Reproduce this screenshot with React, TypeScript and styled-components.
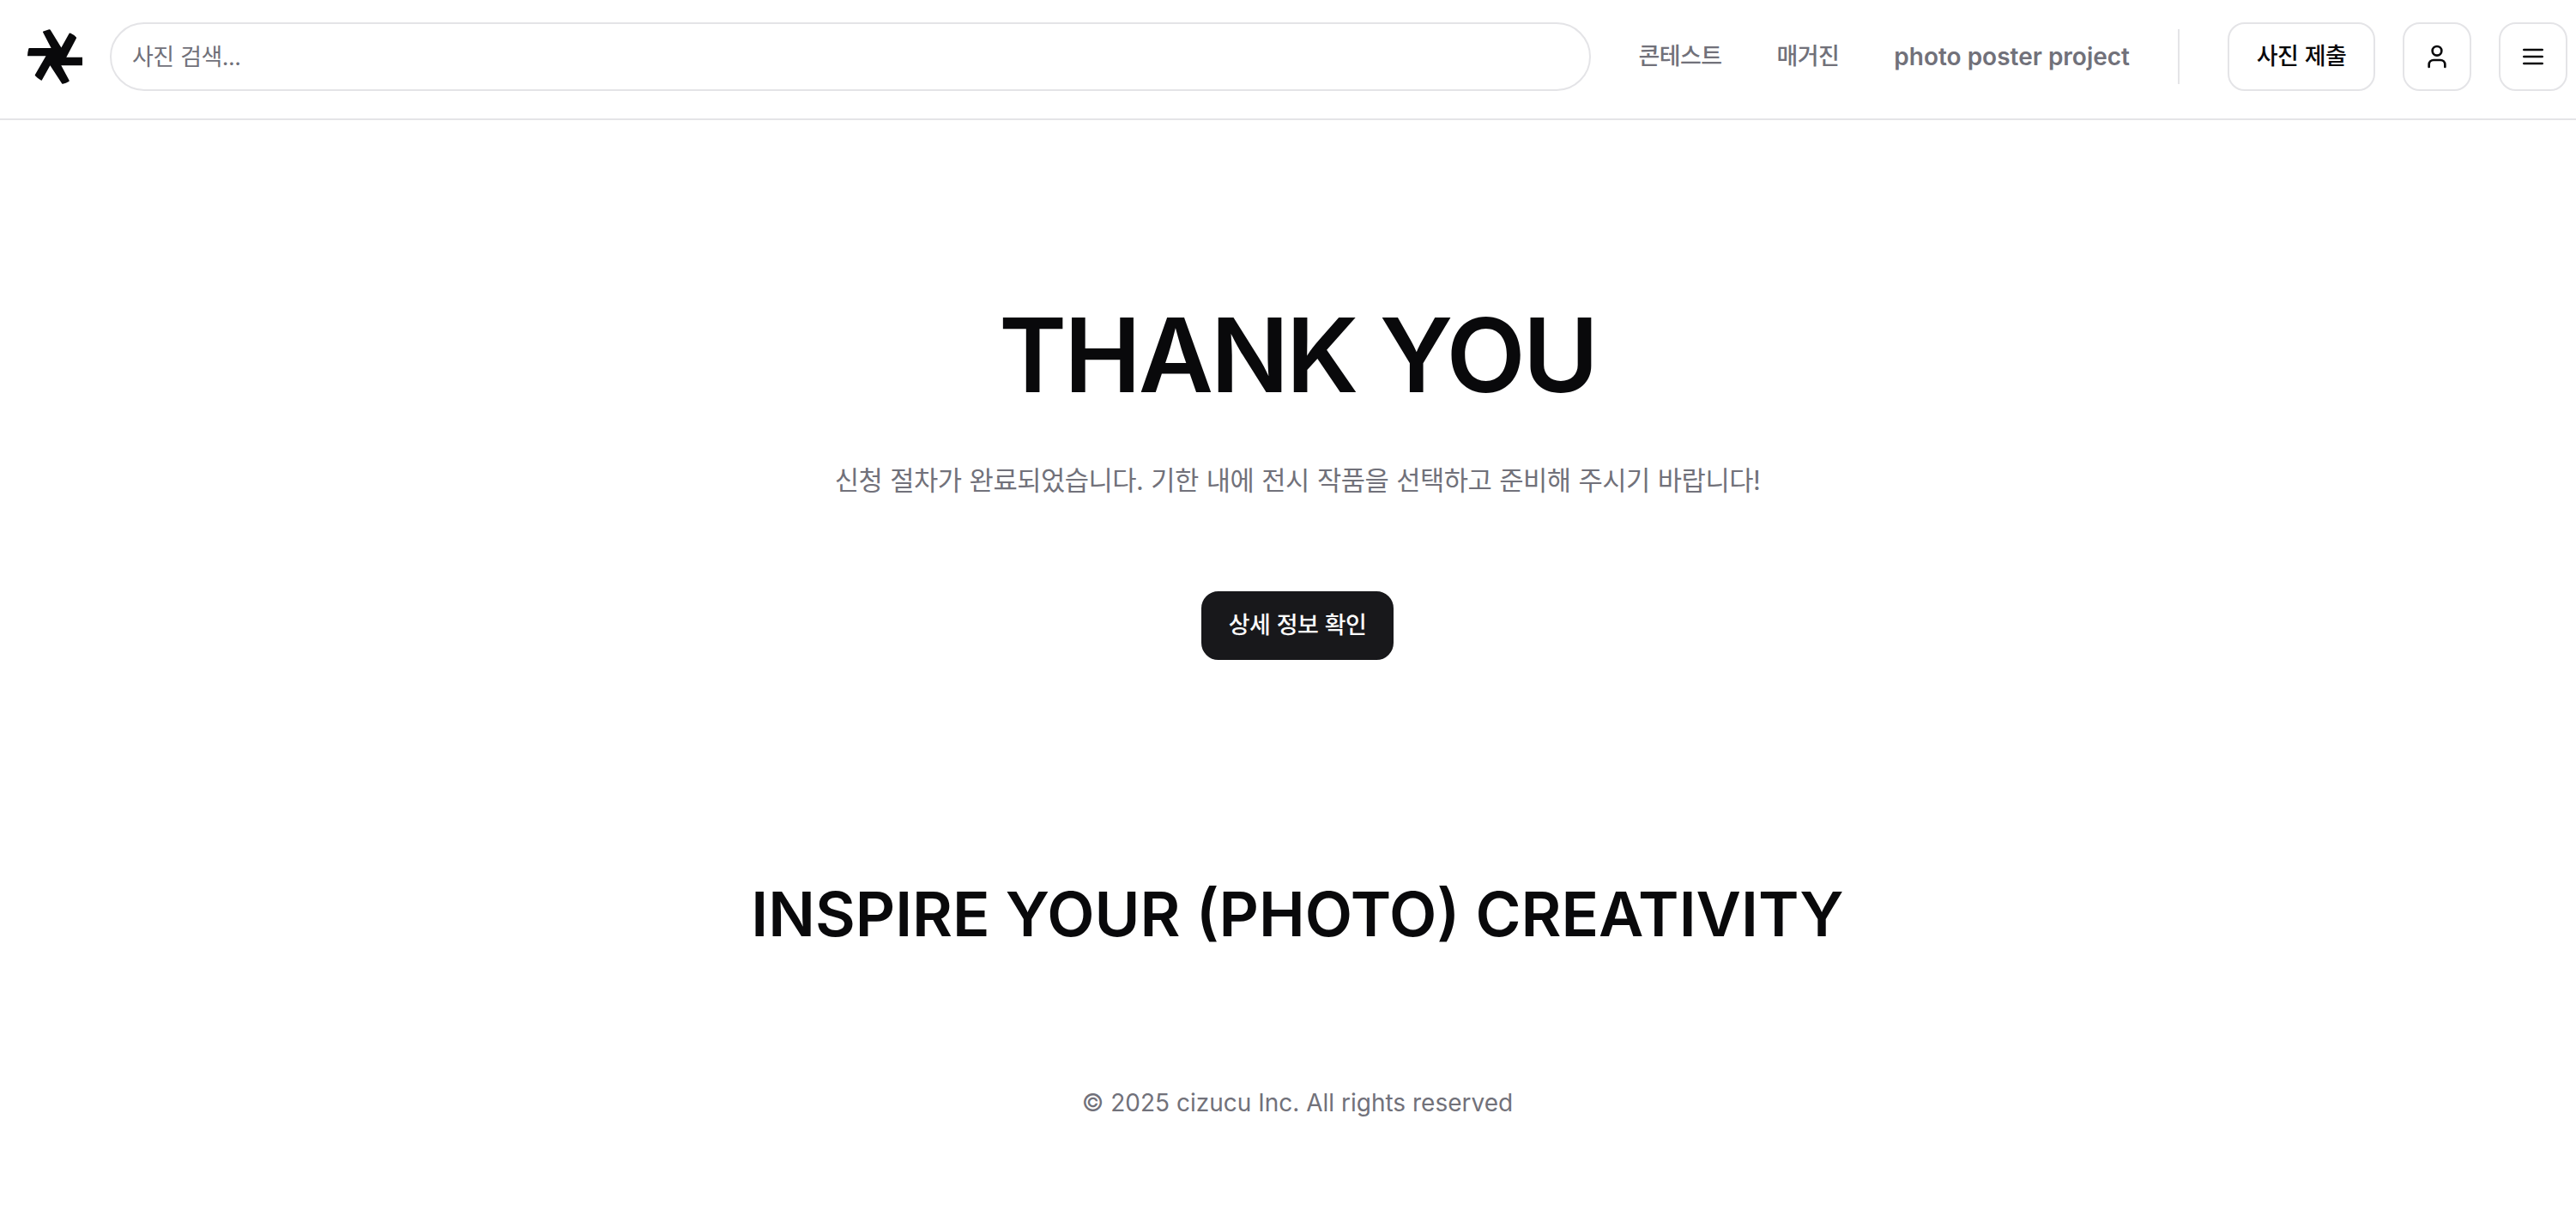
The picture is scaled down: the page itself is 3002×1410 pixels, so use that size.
import React from 'react';
import styled, { createGlobalStyle, css } from 'styled-components';

const fonts = `Inter, "Noto Sans CJK KR", sans-serif`;
const border = '#e4e4e7';
const muted = '#71717a';
const ink = '#09090b';

const hangul = css`
  font-size: 27px;
  line-height: 40px;
  letter-spacing: -0.6px;
  word-spacing: 0.9px;
`;

const Global = createGlobalStyle`
  * { box-sizing: border-box; }
  body { margin: 0; background: #fff; color: ${ink}; font-family: ${fonts}; }
`;

const Header = styled.header`
  display: flex;
  align-items: center;
  height: 140px;
  padding: 0 10px 6px 32px;
  border-bottom: 2px solid ${border};
`;

const Logo = styled.svg`
  flex: none;
  width: 64px;
  height: 64px;
  margin-right: 32px;
  fill: ${ink};
`;

const Search = styled.input`
  flex: 1;
  min-width: 0;
  height: 80px;
  padding: 0 24px;
  border: 2px solid ${border};
  border-radius: 40px;
  background: #fff;
  font-family: ${fonts};
  ${hangul}
  &::placeholder { color: ${muted}; opacity: 1; }
`;

const Nav = styled.nav`
  display: flex;
  align-items: center;
  gap: 64px;
  margin-left: 56px;
`;

const NavLink = styled.a<{ $latin?: boolean }>`
  color: ${muted};
  white-space: nowrap;
  font-weight: 500;
  ${hangul}
  ${p => p.$latin && css`
    font-size: 28px;
    font-weight: 600;
    letter-spacing: 0;
    word-spacing: 0;
  `}
`;

const Rule = styled.div`
  width: 2px;
  height: 64px;
  margin: 0 56px;
  background: ${border};
`;

const Actions = styled.div`
  display: flex;
  gap: 32px;
`;

const Button = styled.button<{ $width: number; $primary?: boolean }>`
  display: flex;
  align-items: center;
  justify-content: center;
  width: ${p => p.$width}px;
  height: 80px;
  padding: 0;
  border: 2px solid ${p => (p.$primary ? '#18181b' : border)};
  border-radius: 20px;
  background: ${p => (p.$primary ? '#18181b' : '#fff')};
  color: ${p => (p.$primary ? '#fafafa' : ink)};
  font-family: ${fonts};
  font-weight: 500;
  ${hangul}
`;

const Icon = styled.svg`
  width: 32px;
  height: 32px;
  fill: none;
  stroke: currentColor;
  stroke-width: 2;
  stroke-linecap: round;
  stroke-linejoin: round;
`;

const Main = styled.main`
  display: flex;
  flex-direction: column;
  align-items: center;
  padding: 214px 0 0 22px;
`;

const Title = styled.h1`
  margin: 0;
  font-size: 120px;
  line-height: 120px;
  font-weight: 600;
  letter-spacing: -0.025em;
`;

const Message = styled.p`
  margin: 62px 0 105px;
  color: ${muted};
  font-size: 30.75px;
  line-height: 48px;
  letter-spacing: -0.53px;
  word-spacing: 0.9px;
`;

const Slogan = styled.h2`
  margin: 256px 0 0;
  font-size: 72px;
  line-height: 80px;
  font-weight: 600;
`;

const Copyright = styled.p`
  margin: 160px 0 0;
  color: ${muted};
  font-size: 28px;
  line-height: 40px;
`;

export default function App() {
  return (
    <>
      <Global />
      <Header>
        <Logo viewBox="0 0 64 64">
          <path d="M18 3.600Q17.700 2.900 18.500 2.500L25.300.200Q26.200 0 26.700.800L39.400 21.400 48.600 5Q49.100 4.200 49.900 4.500 54 6.300 56.900 9.500 57.300 10 57 10.600L45.300 32.700H64V42.200H39.300L48.700 59.800Q49 60.700 48.200 61.100 45 63 41.200 63.800 40.500 64 40.100 63.300L26.400 42.200 16.900 59.200Q16.500 60 15.700 59.600 11.800 57.300 9 54.300 8.500 53.700 8.900 53L21.500 31.300H0Q.200 26.500 1.300 22.700 1.500 22 2.300 22H27.600Z" />
        </Logo>
        <Search placeholder="사진 검색..." />
        <Nav>
          <NavLink>콘테스트</NavLink>
          <NavLink>매거진</NavLink>
          <NavLink $latin>photo poster project</NavLink>
        </Nav>
        <Rule />
        <Actions>
          <Button $width={172}>사진 제출</Button>
          <Button $width={80} aria-label="user">
            <Icon viewBox="0 0 24 24">
              <path d="M19 21v-2a4 4 0 0 0-4-4H9a4 4 0 0 0-4 4v2" />
              <circle cx="12" cy="7" r="4" />
            </Icon>
          </Button>
          <Button $width={80} aria-label="menu">
            <Icon viewBox="0 0 24 24">
              <path d="M4 6h16M4 12h16M4 18h16" />
            </Icon>
          </Button>
        </Actions>
      </Header>
      <Main>
        <Title>THANK YOU</Title>
        <Message>신청 절차가 완료되었습니다. 기한 내에 전시 작품을 선택하고 준비해 주시기 바랍니다!</Message>
        <Button $width={224} $primary>상세 정보 확인</Button>
        <Slogan>INSPIRE YOUR (PHOTO) CREATIVITY</Slogan>
        <Copyright>© 2025 cizucu Inc. All rights reserved</Copyright>
      </Main>
    </>
  );
}
